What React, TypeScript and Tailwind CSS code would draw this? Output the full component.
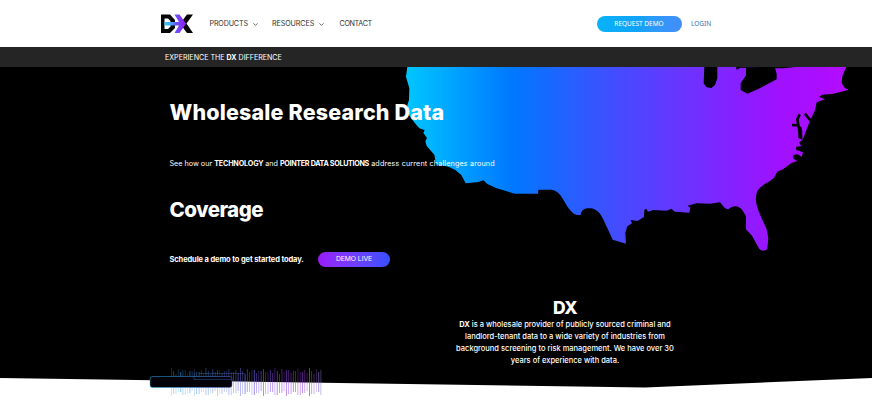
import React from "react";
import { ChevronDown } from "lucide-react";

function Logo() {
  return (
    <svg viewBox="0 0 33 20" className="h-5 w-[33px] shrink-0" aria-label="DX">
      <defs>
        <linearGradient id="arrow" gradientUnits="userSpaceOnUse" x1="4" x2="26" y1="0" y2="0">
          <stop offset="0" stopColor="#35cdf8" />
          <stop offset="0.35" stopColor="#4aa0fb" />
          <stop offset="0.55" stopColor="#6a50fb" />
          <stop offset="1" stopColor="#9a1cf5" />
        </linearGradient>
      </defs>
      <path d="M1 0.500H10L15 6V14L10 19H1Z" fill="#050505" />
      <path d="M4.500 4.500H8L10.500 7V12.500L8 15H4.500Z" fill="#fff" />
      <path d="M27 0.500H33L26.500 9.500L33 19H27L22.500 13V6.500Z" fill="#050505" />
      <path d="M4.500 8H19L14.500 0.500H19.500L26 9.700L19.500 19H14.500L19 11.500H4.500Z" fill="url(#arrow)" />
    </svg>
  );
}

function UsMap() {
  return (
    <svg
      viewBox="0 21 1419 564"
      preserveAspectRatio="none"
      className="absolute top-0 left-[400px] h-[188px] w-[473px]"
      aria-hidden="true"
    >
      <defs>
        <linearGradient id="usa" gradientUnits="userSpaceOnUse" x1="20" x2="1340" y1="0" y2="0">
          <stop offset="0" stopColor="#00c6ff" />
          <stop offset="0.24" stopColor="#0078ff" />
          <stop offset="0.5" stopColor="#4a48ff" />
          <stop offset="0.85" stopColor="#a010ff" />
          <stop offset="1" stopColor="#b30cff" />
        </linearGradient>
      </defs>
      <path
        fill="url(#usa)"
        d="M22 20L18 50L28 85L27 120L22 135L27 165L42 186L58 205L74 210L70 219L81 234L76 244L80 258L103 284L108 312L145 320L165 329L184 345L197 370L235 366L250 361L262 372L290 385L345 401H414L415 389H455C485 395 490 425 507 446C520 463 532 468 542 464C546 448 552 444 575 445C604 452 610 482 622 504L638 539L678 551L676 518L682 499L696 490L692 480L712 483L732 471L733 450L739 446L744 455L760 450L800 452L814 446L825 455L868 458L871 443L863 437L890 430L930 431L960 427L975 445L985 448C1000 433 1020 436 1030 455L1038 468V508L1056 527L1075 562C1080 575 1096 574 1102 566L1105 535L1100 508C1084 470 1065 440 1068 410C1070 385 1085 378 1110 363L1122 353L1132 335L1150 327L1174 309L1192 303L1180 296V285L1193 283L1205 290L1209 277L1188 269V260L1204 259L1197 247L1208 240L1219 210L1232 178L1245 151L1250 127L1275 118L1257 111L1267 104L1300 101L1345 90L1334 83L1325 70L1327 49L1339 20Z"
      />
      <path
        fill="#000"
        d="M913 20L911 70L920 82L934 84L945 75L952 55V20ZM1038 20V46L1022 70V90L1042 101L1075 87L1130 58V42L1124 20ZM1008 20L1010 29L1022 23L1150 25L1195 20Z"
      />
      <path
        d="M1199 163L1192 178L1195 196L1176 195M1194 195L1203 215L1199 235M1215 161L1225 174L1232 182"
        fill="none"
        stroke="#000"
        strokeWidth="8"
      />
      <path d="M1192 195L1205 202L1208 240L1196 235Z" fill="#000" />
    </svg>
  );
}

const BAR_COUNT = 66;
const BARS = Array.from({ length: BAR_COUNT }, (_, i) => {
  const strong = i > 26;
  return {
    x: 22 + i * 2.3,
    top: 1 + ((i * 7) % 5) + (i % 3),
    bottom: 29 - ((i * 11) % 5) - (i % 2),
    opacity: (strong ? 0.42 : 0.26) + ((i * 5) % 7) * 0.05,
    width: i % 4 === 0 ? 1 : 0.8,
  };
});

function Waveform() {
  return (
    <svg viewBox="0 0 176 33" className="absolute top-[300px] left-[149px] h-[33px] w-[176px]" aria-hidden="true">
      <defs>
        <linearGradient id="wave" gradientUnits="userSpaceOnUse" x1="0" x2="172" y1="0" y2="0">
          <stop offset="0" stopColor="#20b8ef" />
          <stop offset="0.5" stopColor="#626fe9" />
          <stop offset="0.88" stopColor="#9829dc" />
          <stop offset="1" stopColor="#8470c8" />
        </linearGradient>
      </defs>
      {BARS.map((b) => (
        <rect key={b.x} x={b.x} y={b.top} width={b.width} height={b.bottom - b.top} opacity={b.opacity} fill="url(#wave)" />
      ))}
      <rect x="1" y="9.500" width="82" height="11" rx="2.500" fill="#020208" stroke="url(#wave)" strokeOpacity="0.5" />
      <path d="M45 6V12.500H83M50 6.500H96" fill="none" stroke="url(#wave)" strokeWidth="0.7" opacity="0.45" />
    </svg>
  );
}

export default function App() {
  return (
    <div className="h-[400px] w-full overflow-hidden bg-white font-['Inter',sans-serif]">
      <header className="flex h-[47px] items-center pl-40 text-[7.200px] whitespace-nowrap text-[#333]">
        <Logo />
        <nav className="mt-0.5 ml-[16.500px] flex items-center tracking-[-0.180px]">
          <a className="flex w-[62.500px] items-center gap-1">
            PRODUCTS <ChevronDown size={7} strokeWidth={2.500} />
          </a>
          <a className="flex w-[67.500px] items-center gap-1 tracking-[-0.120px]">
            RESOURCES <ChevronDown size={7} strokeWidth={2.500} />
          </a>
          <a className="w-8 tracking-[-0.350px]">CONTACT</a>
        </nav>
        <a className="ml-[225px] flex h-4 w-[85px] items-center justify-center rounded-full bg-linear-to-r from-[#08b2f8] via-[#12a2f8] to-[#438cfb] font-['Noto_Sans',sans-serif] text-[6.500px] text-white">
          REQUEST DEMO
        </a>
        <a className="mt-px ml-[9.500px] font-['Noto_Sans',sans-serif] text-[6.500px] text-[#2872ba]">LOGIN</a>
      </header>

      <div className="mr-px flex h-5 items-center bg-[#252525] pt-0.5 pl-[165px] text-[7.100px] whitespace-nowrap text-white">
        <p>
          EXPERIENCE THE <b>DX</b> DIFFERENCE
        </p>
      </div>

      <main className="relative mr-px h-[333px] text-white">
        <div className="absolute inset-x-0 top-0 h-[321px] bg-black [clip-path:polygon(0_0,100%_0,100%_311px,645px_320.500px,0_311px)]">
          <UsMap />
        </div>
        <Waveform />
        <div className="relative flex flex-col pl-[169.500px] whitespace-nowrap">
          <h1 className="mt-[31px] text-[21.500px] leading-7 font-extrabold tracking-[0.160px]">Wholesale Research Data</h1>
          <p className="mt-8 text-[7.200px] leading-3">
            See how our <b className="tracking-[-0.160px]">TECHNOLOGY</b> and{" "}
            <b className="tracking-[-0.330px]">POINTER DATA SOLUTIONS</b>
            <span className="tracking-[0.160px]"> address current challenges around</span>
          </p>
          <h2 className="mt-[26px] text-[20.500px] leading-7 font-extrabold tracking-[-0.550px]">Coverage</h2>
          <div className="mt-[27px] flex h-4 items-center">
            <b className="w-[148.500px] pt-0.5 text-[7.500px] tracking-[-0.120px]">Schedule a demo to get started today.</b>
            <a className="flex h-[15px] w-[72px] items-center justify-center rounded-full bg-linear-to-r from-[#9819fb] to-[#344fff] pt-px text-[6.800px] tracking-[-0.050px]">
              DEMO LIVE
            </a>
          </div>
        </div>
        <section className="relative mt-[31px] ml-[455px] w-[220px] text-center whitespace-nowrap">
          <h2 className="text-[17.500px] leading-5 font-extrabold tracking-[-0.500px]">DX</h2>
          <p className="pt-px text-[7.500px] leading-[11.900px] font-medium">
            <b>DX</b> is a wholesale provider of publicly sourced criminal and
            <br />
            landlord-tenant data to a wide variety of industries from
            <br />
            background screening to risk management. We have over 30
            <br />
            years of experience with data.
          </p>
        </section>
      </main>
    </div>
  );
}
